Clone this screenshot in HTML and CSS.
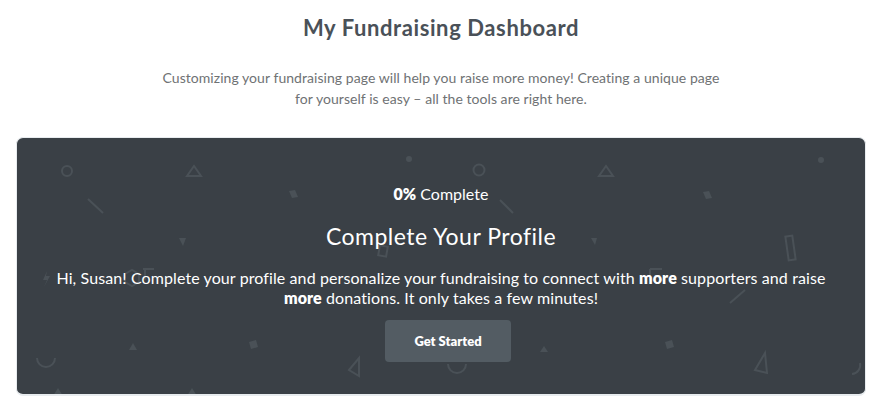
FILE: index.html
```html
<!DOCTYPE html>
<html>
<head>
<meta charset="utf-8">
<link rel="stylesheet" href="styles.css">
</head>
<body>
<main class="page">
  <header class="intro">
    <h1 class="title">My Fundraising Dashboard</h1>
    <p class="lead">Customizing your fundraising page will help you raise more money! Creating a unique page<br>for yourself is easy – all the tools are right here.</p>
  </header>
  <section class="card">
    <svg class="pattern" width="849" height="258" viewBox="0 0 849 258" aria-hidden="true">
      <g fill="none" stroke="#4a5157" stroke-width="2">
        <circle cx="50" cy="33" r="5"/>
        <path d="M170 38 L177 28 L184 38 Z"/>
        <path d="M71 61 L86 75"/>
        <circle cx="462" cy="32" r="5.5"/>
        <path d="M483 62 L496 75"/>
        <path d="M582 38 L589 28 L596 38 Z"/>
        <rect x="770" y="98" width="7" height="24" transform="rotate(-8 773 110)"/>
        <path d="M126 131 L137 131 M128 131 L128 142"/>
        <path d="M633 131 L645 131 M633 131 L633 142"/>
        <path d="M713 165 L728 152"/>
        <path d="M108 136 L115 132 L122 136 L122 144 L115 148 L108 144 Z"/>
        <path d="M20 220 A9 9 0 0 0 38 220"/>
        <path d="M332 232 L342 220 L342 238 Z"/>
        <path d="M738 232 L748 215 L750 235 Z"/>
        <path d="M431 226 A9 9 0 0 0 449 226"/>
        <path d="M843 225 A9 9 0 0 1 835 236"/>
        <rect x="362" y="108" width="8" height="10" transform="rotate(10 366 113)"/>
      </g>
      <g fill="#4a5157">
        <path d="M272 53 L278 52 L281 59 L275 60 Z"/>
        <path d="M686 54 L692 53 L695 60 L689 61 Z"/>
        <circle cx="392" cy="21" r="3"/>
        <circle cx="804" cy="22" r="3"/>
        <path d="M162 100 L169 100 L166 108 Z"/>
        <path d="M574 100 L580 100 L578 107 Z"/>
        <path d="M232 204 L239 202 L241 209 L234 211 Z"/>
        <path d="M648 204 L655 202 L657 209 L650 211 Z"/>
        <path d="M112 212 L116 205 L120 212 Z"/>
        <path d="M523 214 L527 208 L531 214 Z"/>
        <path d="M30 133 L26 142 L30 142 L27 149 L33 138 L29 138 Z"/>
        <path d="M170 258 L175 250 L180 258 Z"/>
        <path d="M36 258 L41 250 L46 258 Z"/>
      </g>
    </svg>
    <div class="content">
      <p class="progress"><strong>0%</strong> Complete</p>
      <h2 class="card-title">Complete Your Profile</h2>
      <p class="message">Hi, Susan! Complete your profile and personalize your fundraising to connect with <strong>more</strong> supporters and raise <strong>more</strong> donations. It only takes a few minutes!</p>
      <button class="cta" type="button">Get Started</button>
    </div>
  </section>
</main>
</body>
</html>
```

FILE: styles.css
```css
* { box-sizing: border-box; }
html, body { margin: 0; padding: 0; background: #ffffff; }
body { font-family: Lato, "Open Sans", sans-serif; }

.page {
  padding: 0 18px 0 16px;
}

.intro {
  text-align: center;
  padding-top: 14px;
}

.title {
  margin: 0;
  font-size: 22px;
  line-height: 27px;
  font-weight: 700;
  color: #4a5158;
  letter-spacing: 0.6px;
}

.lead {
  margin: 26px 0 0;
  font-size: 14px;
  line-height: 21px;
  color: #6f7274;
  letter-spacing: 0.05px;
}

.card {
  position: relative;
  margin-top: 28px;
  height: 259px;
  background: #3a4046;
  border: 1px solid #e8ecef;
  border-bottom-width: 2px;
  border-radius: 7px;
  overflow: hidden;
  color: #ffffff;
}

.pattern {
  position: absolute;
  left: 0;
  top: 0;
}

.content {
  position: relative;
  display: flex;
  flex-direction: column;
  align-items: center;
  text-align: center;
  padding: 46px 20px 0;
}

.progress {
  margin: 0;
  font-size: 16px;
  line-height: 20px;
}
.progress strong { font-weight: 800; }

.card-title {
  margin: 19px 0 0;
  font-size: 23px;
  line-height: 27px;
  font-weight: 400;
  letter-spacing: 0.5px;
}

.message {
  margin: 18px 0 0;
  font-size: 16px;
  line-height: 20px;
  max-width: 790px;
  letter-spacing: 0.1px;
}
.message strong { font-weight: 800; }

.cta {
  margin: 12px 0 0 14px;
  width: 126px;
  height: 42px;
  border: 0;
  border-radius: 4px;
  background: #535c63;
  color: #ffffff;
  font-family: inherit;
  font-size: 13px;
  font-weight: 800;
}
```
